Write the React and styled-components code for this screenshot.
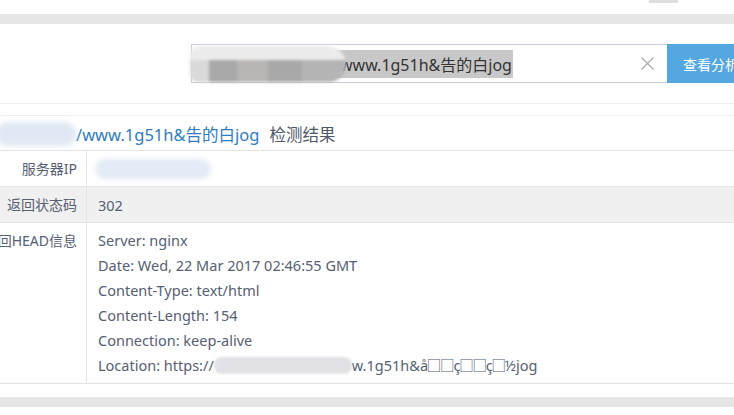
import React from "react";
import styled, { createGlobalStyle } from "styled-components";

const Global = createGlobalStyle`
  html, body { margin: 0; padding: 0; background: #fff; }
  body {
    font-family: "Noto Sans", "Noto Sans CJK SC", sans-serif;
    color: #566072;
    overflow: hidden;
  }
`;

const Page = styled.div`
  width: 734px;
  height: 415px;
  overflow: hidden;
  display: flex;
  flex-direction: column;
`;

const TopStrip = styled.div`
  height: 14px;
  flex: none;
  display: flex;
  justify-content: flex-end;
  padding-right: 56px;
`;

const TopTab = styled.div`
  width: 29px;
  height: 3px;
  background: #dedede;
`;

const GrayBand = styled.div`
  height: 10px;
  flex: none;
  background: #e6e6e6;
`;

const SearchSection = styled.div`
  height: 80px;
  flex: none;
  box-sizing: border-box;
  border-bottom: 1px solid #eeeeee;
  padding: 20px 0 0 191px;
  display: flex;
  align-items: flex-start;
`;

const InputBox = styled.div`
  width: 476px;
  height: 39px;
  flex: none;
  box-sizing: border-box;
  border: 1px solid #c6cedb;
  border-right: none;
  display: flex;
  align-items: center;
  padding-left: 4px;
  position: relative;
`;

const Selected = styled.span`
  display: inline-flex;
  align-items: center;
  height: 28px;
  background: #c8c8c8;
  font-size: 16px;
  color: #333;
  padding-right: 1px;
`;

const MosaicWrap = styled.span`
  display: inline-block;
  width: 144px;
  height: 28px;
  position: relative;
`;

const Mosaic = styled.span`
  position: absolute;
  left: -6px;
  top: -4px;
  width: 156px;
  height: 36px;
  border-radius: 10px 20px 18px 8px;
  background:
    linear-gradient(180deg, #ececec 0 38%, transparent 38%),
    linear-gradient(90deg, #d9d9d9 0 12%, #a9a9a9 12% 30%, #b8b5b2 30% 50%, #a8a8a8 50% 72%, #b4b4b4 72% 100%);
  filter: blur(1.5px);
`;

const ClearIcon = styled.svg`
  position: absolute;
  right: 13px;
  top: 12px;
`;

const SearchButton = styled.button`
  width: 90px;
  height: 39px;
  flex: none;
  border: none;
  background: #55a7e1;
  color: #fff;
  font-family: "Noto Sans CJK SC", sans-serif;
  font-size: 14px;
  text-align: left;
  padding: 0 0 0 16px;
  white-space: nowrap;
`;

const Spacer = styled.div`
  height: 11px;
  flex: none;
`;

const Result = styled.div`
  border-top: 1px solid #eeeeee;
  border-bottom: 1px solid #e4e4e4;
  flex: none;
`;

const TitleRow = styled.div`
  height: 35px;
  box-sizing: border-box;
  border-bottom: 1px solid #e4e4e4;
  display: flex;
  align-items: center;
  font-size: 16.5px;
  white-space: nowrap;
  padding-top: 1px;
`;

const BlurBlock = styled.span`
  display: inline-block;
  flex: none;
  width: ${(p) => p.$w}px;
  height: ${(p) => p.$h}px;
  background: ${(p) => p.$bg};
  border-radius: ${(p) => p.$r || 8}px;
  filter: blur(${(p) => p.$blur || 2}px);
  margin-left: ${(p) => p.$ml || 0}px;
`;

const Link = styled.span`
  color: #2f7cc2;
`;

const TitleSuffix = styled.span`
  color: #4f5868;
  margin-left: 10px;
`;

const Row = styled.div`
  display: flex;
  min-height: 35px;
  background: ${(p) => (p.$shade ? "#f0f0f0" : "#fff")};
  border-bottom: ${(p) => (p.$last ? "none" : "1px solid #e4e4e4")};
`;

const Label = styled.div`
  width: 87px;
  flex: none;
  box-sizing: border-box;
  border-right: 1px solid #e4e4e4;
  padding: ${(p) => (p.$top ? "8px 9px 0 0" : "0 9px 0 0")};
  display: flex;
  justify-content: flex-end;
  align-items: ${(p) => (p.$top ? "flex-start" : "center")};
  font-size: 14px;
  white-space: nowrap;
  line-height: 20px;
`;

const Value = styled.div`
  flex: 1;
  padding: ${(p) => (p.$lines ? "5px 0 5px 11px" : "0 0 0 11px")};
  display: flex;
  flex-direction: ${(p) => (p.$lines ? "column" : "row")};
  align-items: ${(p) => (p.$lines ? "flex-start" : "center")};
  font-size: 14.5px;
  white-space: nowrap;
`;

const Line = styled.div`
  height: 25px;
  line-height: 25px;
  display: flex;
  align-items: center;
`;

const Garbled = styled.span`
  letter-spacing: -1.2px;
`;

const Bottom = styled.div`
  height: 13px;
  flex: none;
`;

const headers = [
  "Server: nginx",
  "Date: Wed, 22 Mar 2017 02:46:55 GMT",
  "Content-Type: text/html",
  "Content-Length: 154",
  "Connection: keep-alive",
];

export default function App() {
  return (
    <Page>
      <Global />
      <TopStrip>
        <TopTab />
      </TopStrip>
      <GrayBand />
      <SearchSection>
        <InputBox>
          <Selected>
            <MosaicWrap>
              <Mosaic />
            </MosaicWrap>
            www.1g51h&amp;告的白jog
          </Selected>
          <ClearIcon width="13" height="13" viewBox="0 0 13 13">
            <path d="M0.5 0.5L12.5 12.5M12.5 0.5L0.5 12.5" stroke="#a8a8a8" strokeWidth="1.1" fill="none" />
          </ClearIcon>
        </InputBox>
        <SearchButton>查看分析</SearchButton>
      </SearchSection>
      <Spacer />
      <Result>
        <TitleRow>
          <BlurBlock $w={80} $h={24} $bg="#dfe8f4" $r={12} $blur={2.5} $ml={-4} />
          <Link>/www.1g51h&amp;告的白jog</Link>
          <TitleSuffix>检测结果</TitleSuffix>
        </TitleRow>
        <Row>
          <Label>服务器IP</Label>
          <Value>
            <BlurBlock $w={116} $h={20} $bg="#e3ebf6" $r={10} $blur={2.5} $ml={-3} />
          </Value>
        </Row>
        <Row $shade>
          <Label>返回状态码</Label>
          <Value>302</Value>
        </Row>
        <Row $last>
          <Label $top>返回HEAD信息</Label>
          <Value $lines>
            {headers.map((h) => (
              <Line key={h}>{h}</Line>
            ))}
            <Line>
              Location: https://
              <BlurBlock $w={138} $h={17} $bg="#e2e2e6" $r={8} $blur={1} />
              w.1g51h&amp;<Garbled>å□□ç□□ç□</Garbled>½jog
            </Line>
          </Value>
        </Row>
      </Result>
      <Bottom />
      <GrayBand />
    </Page>
  );
}
